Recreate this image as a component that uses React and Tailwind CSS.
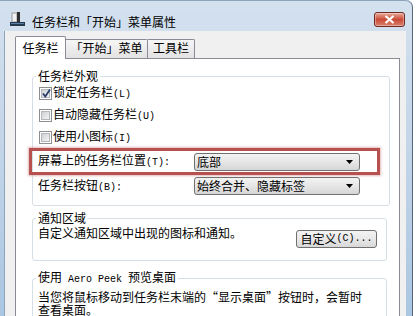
import React from 'react';

// split text so ascii runs get the half-width mono look of SimSun
function T({ children }) {
  const parts = String(children).split(/([\x20-\x7e]+)/);
  return parts.map((p, i) =>
    /^[\x20-\x7e]+$/.test(p) ? (
      <span key={i} className="font-['Liberation_Mono'] text-[10px] whitespace-pre">
        {p}
      </span>
    ) : (
      p
    )
  );
}

const Checkbox = ({ checked }) => (
  <span className="w-[13px] h-[13px] shrink-0 border border-[#8e8f8f] bg-white p-[1px] flex">
    <span className="relative flex-1 border border-[#b4b8bd] bg-gradient-to-br from-[#cfd1d4] to-[#f4f4f4]">
      {checked && (
        <svg className="absolute -left-[1px] -top-[2px]" width="11" height="11" viewBox="0 0 11 11">
          <path d="M2 5.5 L4.3 8.5 L9 1.5" fill="none" stroke="#2a3d6b" strokeWidth="1.8" />
        </svg>
      )}
    </span>
  </span>
);

const Select = ({ value }) => (
  <div className="w-[166px] h-[18px] flex items-center justify-between border border-[#707070] rounded-[3px] bg-gradient-to-b from-[#f3f3f3] via-[#e6e6e6] to-[#d6d6d6] pl-[2px] pr-[6px]">
    <span className="leading-[12px]">{value}</span>
    <svg width="7" height="4" viewBox="0 0 7 4">
      <path d="M0 0 H7 L3.5 4 Z" fill="#000" />
    </svg>
  </div>
);

const Group = ({ title, className = '', children }) => (
  <fieldset className={`border border-[#d5dfe5] rounded-[3px] pl-[3px] pr-[9px] ${className}`}>
    <legend className="px-[2px] leading-[12px]">
      <T>{title}</T>
    </legend>
    {children}
  </fieldset>
);

const TaskbarIcon = () => (
  <svg width="16" height="16" viewBox="0 0 16 16">
    <rect x="2" y="2" width="5" height="9" fill="#f2f2f2" stroke="#9a9a9a" />
    <rect x="7" y="1" width="3" height="12" fill="#2e2e2e" />
    <rect x="0" y="11" width="15" height="4" fill="#24384f" />
    <rect x="1" y="12" width="13" height="1" fill="#5b7fa6" />
  </svg>
);

export default function App() {
  const rows = [
    { label: '锁定任务栏(L)', checked: true },
    { label: '自动隐藏任务栏(U)', checked: false },
    { label: '使用小图标(I)', checked: false },
  ];

  return (
    <div className="w-[417px] h-[316px] bg-white overflow-hidden flex font-['Noto_Sans_CJK_SC',sans-serif] text-[12px] text-black">
      <div className="w-[413px] h-full flex flex-col border-r border-[#57677a] rounded-tr-[7px] bg-gradient-to-b from-[#d4e1ef] via-[#c2d4e8] to-[#aac6e2]">
        {/* title bar */}
        <div className="h-[31px] shrink-0 flex items-start pl-[10px] pt-[10px] border-t border-[#8ea3ba] rounded-tr-[7px]">
          <TaskbarIcon />
          <span className="ml-[6px] mt-[5px] leading-[12px]">任务栏和「开始」菜单属性</span>
          <div className="ml-auto mr-[7px] mt-[1px] w-[31px] h-[15px] rounded-[3px] border border-[#6e2a22] bg-gradient-to-b from-[#e9a99b] via-[#c94a36] to-[#d9806a] flex items-center justify-center shadow-[inset_0_0_0_1px_rgba(255,255,255,0.35)]">
            <svg width="11" height="9" viewBox="0 0 11 9">
              <path d="M1.5 1 L9.5 8 M9.5 1 L1.5 8" stroke="#fff" strokeWidth="2.2" />
            </svg>
          </div>
        </div>

        {/* dialog body */}
        <div className="ml-[4px] w-[402px] flex-1 flex flex-col bg-[#f0f0f0] border-l border-[#8fa4bb]">
          {/* tabs */}
          <div className="h-[27px] shrink-0 flex items-end pl-[10px]">
            <div className="w-[51px] h-[23px] -mb-px relative z-10 bg-white border border-b-0 border-[#898c95] rounded-t-[2px] flex justify-center pt-[5px] leading-[12px]">
              任务栏
            </div>
            <div className="w-[82px] h-[19px] border border-l-0 border-b-0 border-[#898c95] rounded-tr-[2px] bg-gradient-to-b from-[#f6f6f6] to-[#e2e2e2] flex justify-center pt-[2px] leading-[12px]">
              「开始」菜单
            </div>
            <div className="w-[47px] h-[19px] border border-l-0 border-b-0 border-[#898c95] rounded-tr-[2px] bg-gradient-to-b from-[#f6f6f6] to-[#e2e2e2] flex justify-center pt-[2px] leading-[12px]">
              工具栏
            </div>
          </div>

          {/* tab page */}
          <div className="ml-[10px] w-[385px] flex-1 bg-white border border-[#898c95] pl-[16px] pr-[12px]">
            <Group title="任务栏外观" className="mt-[11px] pb-[8px]">
              {rows.map((r) => (
                <div key={r.label} className="h-[22px] flex items-center">
                  <span className="ml-[3px]">
                    <Checkbox checked={r.checked} />
                  </span>
                  <span className="ml-[1px] leading-[12px]">
                    <T>{r.label}</T>
                  </span>
                </div>
              ))}

              <div className="-ml-[7px] w-[351px] h-[27px] flex items-center border-[3px] border-[#b7514f] shadow-[0_0_2px_1px_rgba(200,120,120,0.5)] pl-[6px]">
                <span className="w-[156px] leading-[12px]">
                  <T>屏幕上的任务栏位置(T):</T>
                </span>
                <Select value="底部" />
              </div>

              <div className="h-[22px] flex items-center pl-[2px]">
                <span className="w-[156px] leading-[12px]">
                  <T>任务栏按钮(B):</T>
                </span>
                <Select value="始终合并、隐藏标签" />
              </div>
            </Group>

            <Group title="通知区域" className="mt-[6px] pb-[12px]">
              <div className="flex justify-between items-start">
                <span className="pl-[2px] pt-[3px] leading-[12px]">自定义通知区域中出现的图标和通知。</span>
                <div className="mt-[6px] w-[81px] h-[18px] border border-[#707070] rounded-[3px] bg-gradient-to-b from-[#f3f3f3] via-[#e8e8e8] to-[#d8d8d8] flex items-center justify-center leading-[12px]">
                  <T>自定义(C)...</T>
                </div>
              </div>
            </Group>

            <Group title="使用 Aero Peek 预览桌面" className="mt-[10px] pb-[12px]">
              <p className="pl-[2px] pt-[4px] leading-[13px]">
                当您将鼠标移动到任务栏末端的“显示桌面”按钮时，会暂时
                <br />
                查看桌面。
              </p>
            </Group>
          </div>
        </div>
      </div>
    </div>
  );
}
